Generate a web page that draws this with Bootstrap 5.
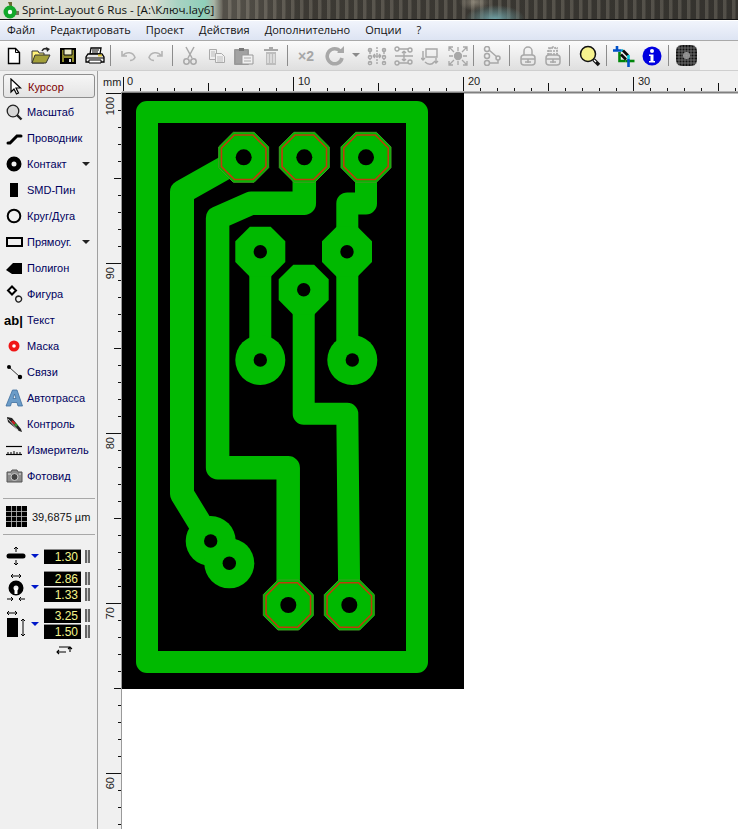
<!DOCTYPE html>
<html lang="ru">
<head>
  <meta charset="UTF-8">
  <meta name="viewport" content="width=device-width, initial-scale=1">
  <title>Sprint-Layout 6 Rus</title>
  <link href="https://cdn.jsdelivr.net/npm/bootstrap@5.3.0/dist/css/bootstrap.min.css" rel="stylesheet">
  <style>
    html, body { height: 100%; }
    body {
      margin: 0;
      overflow: hidden;
      background: #f0f0f0;
      font-family: "Open Sans", "Liberation Sans", sans-serif;
    }
    .app-shell { width: 738px; height: 829px; overflow: hidden; }
    svg { display: block; flex: none; }

    /* title bar */
    .title-bar {
      height: 19px;
      padding-left: 2px;
      font-size: 11.6px;
      color: #111;
      background:
        radial-gradient(ellipse 30px 14px at 495px 19px, #6fa0a4 0, rgba(111,160,164,0) 100%),
        radial-gradient(ellipse 16px 9px at 475px 2px, rgba(200,190,170,.5) 0, rgba(200,190,170,0) 100%),
        repeating-radial-gradient(circle at 30px 8px, rgba(120,115,105,.35) 0 3px, rgba(30,28,25,.3) 4px 9px),
        linear-gradient(90deg, #6b675e 0, #6b675e 235px, #4a4740 300px, #3e3c37 738px);
    }
    .title-glass {
      position: absolute;
      left: 0; top: 0;
      width: 222px; height: 19px;
      background: linear-gradient(90deg, #dedfd6 0, #dcdfd4 150px, #a8d2c2 178px, #8fcfba 205px, #a8b4a4 214px, #6b675e 222px);
    }
    .title-inner { position: relative; gap: 3px; }
    .title-text { white-space: nowrap; }

    /* menu */
    .menu-bar {
      height: 22px;
      padding-left: 7px;
      gap: 15px;
      font-size: 11px;
      color: #111;
      border-top: 1px solid #111;
      border-bottom: 1px solid #a9a9a9;
      box-shadow: inset 0 1px 0 #fff;
      background: linear-gradient(#f2f5fc, #dde4f3);
    }

    /* toolbar */
    .tool-bar { height: 30px; border-bottom: 1px solid #cfcfcf; background: #f1f1f1; }
    .tool-strip { width: 700px; height: 29px; background: linear-gradient(#fbfbfb, #dfdfdf); }
    .tb-btn { width: 27px; height: 29px; }
    .tb-w25 { width: 25px; }
    .tb-w26 { width: 26px; }
    .tb-w28 { width: 28px; }
    .tb-w30 { width: 30px; }
    .tb-w12 { width: 12px; }
    .tb-sep { width: 1px; height: 21px; margin: 0 2px; background: #8c8c8c; }
    .tb-ml1 { margin-left: 1px; }
    .tb-ml2 { margin-left: 2px; }
    .tb-ml3 { margin-left: 3px; }
    .tb-ml4 { margin-left: 4px; }
    .tb-pr1 { padding-right: 1px; }
    .tb-pr2 { padding-right: 2px; }
    .tb-times { font: 700 14px "Liberation Sans", sans-serif; color: #a6a6a6; }

    /* left tool panel */
    .side-panel {
      width: 98px;
      height: 758px;
      padding: 3px 0 0 3px;
      font: 11px "Liberation Sans", sans-serif;
      color: #00005e;
      border-right: 1px solid #a0a0a0;
      background: #f0f0f0;
    }
    .tool-item { width: 92px; height: 26px; padding-left: 1px; white-space: nowrap; }
    .tool-item-icon { width: 23px; }
    .tool-item.is-active {
      height: 24px;
      margin-bottom: 1px;
      padding-top: 1px;
      color: #7e0000;
      border: 1px solid #8e8e8e;
      border-radius: 3px;
      background: linear-gradient(#f6f6f6, #e4e4e4);
    }
    .tool-ab { font: 700 13px "Liberation Sans", sans-serif; color: #000; white-space: nowrap; }
    .tool-caret {
      margin-left: auto;
      margin-right: 5px;
      border-left: 4px solid transparent;
      border-right: 4px solid transparent;
      border-top: 4px solid #222;
    }
    .side-rule { width: 92px; height: 1px; background: #a8a8a8; }
    .side-rule-first { margin-top: 9px; }
    .grid-row { height: 35px; width: 92px; padding-left: 3px; gap: 5px; color: #111; }
    .param-row { width: 92px; padding-left: 3px; }
    .param-row-first { margin-top: 12px; }
    .param-row-next { margin-top: 6px; }
    .param-icon { width: 25px; }
    .blue-caret {
      width: 0;
      margin-right: 5px;
      border-left: 4px solid transparent;
      border-right: 4px solid transparent;
      border-top: 4px solid #0018c8;
    }
    .num-stack { display: flex; flex-direction: column; gap: 1px; }
    .num-box {
      width: 37px;
      height: 15px;
      padding-right: 3px;
      text-align: right;
      font: 12px/14px "Liberation Sans", sans-serif;
      color: #f4f48c;
      background: #000;
      border-top: 1px solid #888;
    }
    .num-spin {
      width: 5px;
      height: 13px;
      margin-left: 4px;
      background: linear-gradient(90deg, #666 0 40%, #ccc 40% 60%, #666 60%);
    }
    .swap-row { width: 92px; padding-left: 51px; height: 14px; }
    .work-area { width: 640px; height: 758px; background: #f0f0f0; }
    .rule-text { font: 11px "Liberation Sans", sans-serif; fill: #222; }
  </style>
</head>
<body>
<div class="app-shell d-flex flex-column">

  <!-- Title bar -->
  <div class="title-bar position-relative d-flex align-items-center">
    <div class="title-glass"></div>
    <div class="title-inner d-flex align-items-center">
      <svg width="17" height="18" viewBox="0 0 17 18">
        <path d="M6 1h4v4l-2 1z" fill="#6a6a30"/>
        <path d="M12 10h5v4h-5z" fill="#77705a"/>
        <circle cx="8" cy="11" r="6.5" fill="#12a82a"/>
        <circle cx="8" cy="11" r="2.2" fill="#fff"/>
      </svg>
      <span class="title-text">Sprint-Layout 6 Rus - [A:\Ключ.lay6]</span>
    </div>
  </div>

  <!-- Menu -->
  <div class="menu-bar d-flex align-items-center">
    <span>Файл</span><span>Редактировать</span><span>Проект</span><span>Действия</span><span>Дополнительно</span><span>Опции</span><span>?</span>
  </div>

  <!-- Toolbar -->
  <div class="tool-bar">
    <div class="tool-strip d-flex align-items-center">
      <div class="d-flex">
        <div class="tb-btn d-flex align-items-center justify-content-center">
          <svg width="18" height="18" viewBox="0 0 18 18"><path d="M3.5 1.5h7l4 4v11h-11z" fill="#fff" stroke="#000" stroke-width="1.4"/><path d="M10.5 1.5v4h4" fill="none" stroke="#000"/></svg>
        </div>
        <div class="tb-btn d-flex align-items-center justify-content-center">
          <svg width="20" height="18" viewBox="0 0 20 18"><path d="M1 4h6l1 2h5v10H1z" fill="#fff27a" stroke="#333"/><path d="M1 16l3-8h15l-4 8z" fill="#a3a03a" stroke="#333"/><path d="M11 4c1-2 3-3 5-2" fill="none" stroke="#222" stroke-width="1.6"/><path d="M15 0l4 2-3 3z" fill="#222"/></svg>
        </div>
        <div class="tb-btn d-flex align-items-center justify-content-center">
          <svg width="18" height="18" viewBox="0 0 18 18"><path d="M2 2h14v14H2z" fill="#8d8a2c" stroke="#000" stroke-width="2"/><path d="M5 2h8v6H5z" fill="#e9e9c8" stroke="#000"/><path d="M5 11h8v5H5z" fill="#000"/><path d="M10 12h2v3h-2z" fill="#ddd"/></svg>
        </div>
        <div class="tb-btn d-flex align-items-center justify-content-center">
          <svg width="20" height="18" viewBox="0 0 20 18"><path d="M6 1h10l-1 6H5z" fill="#fff" stroke="#000" stroke-width="1.3"/><path d="M7 3h7M7 5h6" stroke="#000"/><path d="M3 7h14l2 3v5H1v-5z" fill="#e8e8e8" stroke="#000" stroke-width="1.3"/><path d="M1 11h18" stroke="#000"/><path d="M13 8.500h4" stroke="#d8c23a" stroke-width="2"/><path d="M4 13h12v3H4z" fill="#fff" stroke="#000"/></svg>
        </div>
      </div>
      <div class="tb-sep"></div>

      <div class="d-flex tb-ml3 tb-pr2">
        <div class="tb-btn tb-w26 d-flex align-items-center justify-content-center">
          <svg width="16" height="12" viewBox="0 0 16 12"><path d="M1 1v5h5M2 5.500c3-4 10-4 12 2-1 2-3 3-5 3" fill="none" stroke="#b4b4b4" stroke-width="1.600"/></svg>
        </div>
        <div class="tb-btn tb-w26 d-flex align-items-center justify-content-center">
          <svg width="16" height="12" viewBox="0 0 16 12"><path d="M15 1v5h-5M14 5.500c-3-4-10-4-12 2 1 2 3 3 5 3" fill="none" stroke="#b4b4b4" stroke-width="1.600"/></svg>
        </div>
      </div>
      <div class="tb-sep"></div>

      <div class="d-flex tb-ml1 tb-pr1">
        <div class="tb-btn d-flex align-items-center justify-content-center">
          <svg width="14" height="20" viewBox="0 0 14 20"><path d="M3 1l6 11M11 1L5 12" stroke="#a8a8a8" stroke-width="1.500"/><circle cx="3.500" cy="15.500" r="2.700" fill="none" stroke="#a8a8a8" stroke-width="1.500"/><circle cx="10.500" cy="15.500" r="2.700" fill="none" stroke="#a8a8a8" stroke-width="1.500"/></svg>
        </div>
        <div class="tb-btn d-flex align-items-center justify-content-center">
          <svg width="18" height="16" viewBox="0 0 18 16"><path d="M1.500 1.500h7v10h-7z" fill="#eee" stroke="#aaa"/><path d="M3 4h4M3 6h4M3 8h4" stroke="#bbb"/><path d="M7.500 5.500h6l3 3v6h-9z" fill="#f2f2f2" stroke="#aaa"/><path d="M9 9h6M9 11h6M9 13h6" stroke="#bbb"/></svg>
        </div>
        <div class="tb-btn d-flex align-items-center justify-content-center">
          <svg width="20" height="18" viewBox="0 0 20 18"><path d="M1 3h13v14H1z" fill="#a2a2a2" stroke="#9a9a9a" stroke-linejoin="round" stroke-width="2"/><path d="M5 1h5v3H5z" fill="#777"/><path d="M8 8h11v9H8z" fill="#f0f0f0" stroke="#999"/><path d="M10 11h7M10 14h7" stroke="#aaa"/></svg>
        </div>
        <div class="tb-btn d-flex align-items-center justify-content-center">
          <svg width="16" height="20" viewBox="0 0 16 20"><path d="M6 1h4v2h5v2H1V3h5z" fill="#a8a8a8"/><path d="M3 6h10v13H3z" fill="#bdbdbd"/><path d="M5 8v9M8 8v9M11 8v9" stroke="#eee" stroke-width="1.200"/></svg>
        </div>
      </div>
      <div class="tb-sep"></div>

      <div class="d-flex tb-ml2 align-items-center">
        <div class="tb-btn tb-w28 d-flex align-items-center justify-content-center"><span class="tb-times">×2</span></div>
        <div class="tb-btn tb-w30 d-flex align-items-center justify-content-center">
          <svg width="20" height="20" viewBox="0 0 20 20"><path d="M15.500 5.500A7.500 7.500 0 1 0 17 12" fill="none" stroke="#a8a8a8" stroke-width="3.600"/><path d="M12 7h7V0z" fill="#a8a8a8"/></svg>
        </div>
        <div class="tb-btn tb-w12 d-flex align-items-center justify-content-center">
          <svg width="8" height="5" viewBox="0 0 8 5"><path d="M0 0h8L4 4z" fill="#8a8a8a"/></svg>
        </div>
        <div class="tb-btn tb-ml1 d-flex align-items-center justify-content-center">
          <svg width="20" height="20" viewBox="0 0 20 20" fill="none" stroke="#a8a8a8" stroke-width="1.400"><path d="M3 3v14M17 3v14M10 1v18" stroke-dasharray="2 1"/><circle cx="3" cy="4" r="1.600"/><circle cx="3" cy="11" r="1.600"/><circle cx="3" cy="17" r="1.600"/><circle cx="17" cy="4" r="1.600"/><circle cx="17" cy="11" r="1.600"/><circle cx="17" cy="17" r="1.600"/><path d="M6 10h8M6 10l2-2M6 10l2 2M14 10l-2-2M14 10l-2 2"/></svg>
        </div>
        <div class="tb-btn d-flex align-items-center justify-content-center">
          <svg width="20" height="20" viewBox="0 0 20 20" fill="none" stroke="#a8a8a8" stroke-width="1.400"><circle cx="3" cy="3" r="2"/><circle cx="16" cy="4" r="2"/><circle cx="3" cy="17" r="2"/><circle cx="16" cy="16" r="2"/><path d="M5 3h9M5 17h9M1 10h18" /><path d="M10 5v10M10 5L8 7M10 5l2 2M10 15l-2-2M10 15l2-2"/></svg>
        </div>
        <div class="tb-btn d-flex align-items-center justify-content-center">
          <svg width="20" height="20" viewBox="0 0 20 20" fill="none" stroke="#a8a8a8" stroke-width="1.400"><path d="M5 3h11v8H5zM2 5v9M0 12l2 2 2-2"/><path d="M15 12v5M13 15l2 2 2-2"/><path d="M4 16c3 3 7 3 9 0"/></svg>
        </div>
        <div class="tb-btn d-flex align-items-center justify-content-center">
          <svg width="20" height="20" viewBox="0 0 20 20" fill="none" stroke="#a8a8a8" stroke-width="1.300"><circle cx="10" cy="10" r="3.500" fill="#a8a8a8"/><path d="M1 1l5 5M1 5V1h4M19 1l-5 5M19 5V1h-4M1 19l5-5M1 15v4h4M19 19l-5-5M19 15v4h-4M10 1v4M10 15v4M1 10h4M15 10h4"/></svg>
        </div>
      </div>
      <div class="tb-sep"></div>

      <div class="tb-btn tb-w30 tb-ml1 d-flex align-items-center justify-content-center">
        <svg width="18" height="20" viewBox="0 0 18 20" fill="none" stroke="#a8a8a8" stroke-width="1.500"><circle cx="4" cy="3" r="2.500"/><circle cx="4" cy="10" r="2.500"/><circle cx="4" cy="17" r="2.500"/><circle cx="15" cy="12" r="2"/><path d="M6 4l8 7M6 17h9v-3"/></svg>
      </div>
      <div class="tb-sep"></div>

      <div class="d-flex tb-ml3 tb-pr2">
        <div class="tb-btn tb-w25 d-flex align-items-center justify-content-center">
          <svg width="16" height="20" viewBox="0 0 16 20" fill="none" stroke="#a8a8a8" stroke-width="1.500"><path d="M4 9V5a4 4 0 0 1 8 0v4"/><rect x="1" y="9" width="14" height="10" rx="3" fill="#e8e8e8"/><path d="M1 13h14M5 16h6M8 13v4"/></svg>
        </div>
        <div class="tb-btn tb-w25 d-flex align-items-center justify-content-center">
          <svg width="16" height="20" viewBox="0 0 16 20" fill="none" stroke="#a8a8a8" stroke-width="1.500"><path d="M4 9V5a4 4 0 0 1 8 0v4M3 2h10M2 5h12M2 8h12" stroke-dasharray="2 1"/><rect x="1" y="9" width="14" height="10" rx="3" fill="#e8e8e8"/><path d="M1 13h14M5 16h6M8 13v4"/></svg>
        </div>
      </div>
      <div class="tb-sep"></div>

      <div class="tb-btn tb-w28 tb-ml4 d-flex align-items-center justify-content-center">
        <svg width="22" height="22" viewBox="0 0 22 22"><circle cx="9" cy="9" r="7.500" fill="#f7f38e" stroke="#111" stroke-width="1.500"/><path d="M14.500 14.500l5.500 5.500" stroke="#111" stroke-width="3.500"/><path d="M15 15l2 2" stroke="#fff" stroke-width="1.200"/></svg>
      </div>
      <div class="tb-sep"></div>

      <div class="d-flex tb-ml1">
        <div class="tb-btn tb-w28 d-flex align-items-center justify-content-center">
          <svg width="22" height="22" viewBox="0 0 22 22"><path d="M0 5.500h8M4 1v4" stroke="#0050c8" stroke-width="2.600"/><path d="M8 5.500h2" stroke="#00a8c8" stroke-width="2.600"/><path d="M10 5.500l5 5" stroke="#0a0a0a" stroke-width="2.600"/><path d="M6.500 7v9h6" fill="none" stroke="#00860a" stroke-width="2.600"/><path d="M12.500 16h9" stroke="#00860a" stroke-width="2.600"/><path d="M8 9.500l5 5" stroke="#0a0a0a" stroke-width="2.600"/><path d="M15.500 10v4" stroke="#00c8d8" stroke-width="2.600"/><path d="M15.500 14v8" stroke="#0050c8" stroke-width="2.600"/></svg>
        </div>
        <div class="tb-btn tb-w28 d-flex align-items-center justify-content-center">
          <svg width="20" height="20" viewBox="0 0 20 20"><circle cx="10" cy="10" r="9.500" fill="#0000e0"/><circle cx="10" cy="5" r="2" fill="#fff"/><path d="M7 8.500h4.500V15H13v1.500H7V15h1.500V10H7z" fill="#fff"/></svg>
        </div>
      </div>
      <div class="tb-sep"></div>

      <div class="tb-btn tb-w26 tb-ml2 d-flex align-items-center justify-content-center">
        <svg width="21" height="21" viewBox="0 0 21 21"><rect width="21" height="21" rx="6" fill="#111"/><circle cx="10.500" cy="10.500" r="3.500" fill="#999"/><path d="M0 3h21M0 6h21M0 9h21M0 12h21M0 15h21M0 18h21M3 0v21M6 0v21M9 0v21M12 0v21M15 0v21M18 0v21" stroke="#888" stroke-width=".7"/></svg>
      </div>
    </div>
  </div>

  <div class="d-flex flex-grow-1">
    <!-- Left tools -->
    <div class="side-panel d-flex flex-column">
      <div class="tool-item is-active d-flex align-items-center">
        <div class="tool-item-icon"><svg width="18" height="18" viewBox="0 0 18 18"><path d="M6 1v13l3-3 2.500 5 2-1-2.500-5h4.500z" fill="#fff" stroke="#000" stroke-width="1.200"/></svg></div>
        <span>Курсор</span>
      </div>
      <div class="tool-item d-flex align-items-center">
        <div class="tool-item-icon"><svg width="20" height="20" viewBox="0 0 20 20"><circle cx="9" cy="9" r="5.800" fill="#d8d8d8" stroke="#222" stroke-width="1.300"/><path d="M13 13l4.500 4.500" stroke="#222" stroke-width="2.400"/></svg></div>
        <span>Масштаб</span>
      </div>
      <div class="tool-item d-flex align-items-center">
        <div class="tool-item-icon"><svg width="20" height="20" viewBox="0 0 20 20"><path d="M4 15h2l7-7h4" fill="none" stroke="#000" stroke-width="3" stroke-linecap="round"/></svg></div>
        <span>Проводник</span>
      </div>
      <div class="tool-item d-flex align-items-center">
        <div class="tool-item-icon"><svg width="20" height="20" viewBox="0 0 20 20"><circle cx="10" cy="10" r="5" fill="none" stroke="#000" stroke-width="5"/></svg></div>
        <span>Контакт</span><span class="tool-caret"></span>
      </div>
      <div class="tool-item d-flex align-items-center">
        <div class="tool-item-icon"><svg width="20" height="20" viewBox="0 0 20 20"><path d="M6 3h8v14H6z" fill="#000"/></svg></div>
        <span>SMD-Пин</span>
      </div>
      <div class="tool-item d-flex align-items-center">
        <div class="tool-item-icon"><svg width="20" height="20" viewBox="0 0 20 20"><circle cx="10" cy="10" r="6.300" fill="none" stroke="#000" stroke-width="2"/></svg></div>
        <span>Круг/Дуга</span>
      </div>
      <div class="tool-item d-flex align-items-center">
        <div class="tool-item-icon"><svg width="20" height="20" viewBox="0 0 20 20"><path d="M3 6h15v8H3z" fill="none" stroke="#000" stroke-width="2"/></svg></div>
        <span>Прямоуг.</span><span class="tool-caret"></span>
      </div>
      <div class="tool-item d-flex align-items-center">
        <div class="tool-item-icon"><svg width="20" height="20" viewBox="0 0 20 20"><path d="M2 12l7-7h9v11H8z" fill="#000"/></svg></div>
        <span>Полигон</span>
      </div>
      <div class="tool-item d-flex align-items-center">
        <div class="tool-item-icon"><svg width="20" height="20" viewBox="0 0 20 20"><path d="M8 2.500l4 4-4 4-4-4z" fill="#fff" stroke="#000" stroke-width="2"/><path d="M12 16.500a3 3 0 1 1 3 1.500c-4 1-5-7 .5-5.500" fill="none" stroke="#222" stroke-width="1.400"/></svg></div>
        <span>Фигура</span>
      </div>
      <div class="tool-item d-flex align-items-center">
        <div class="tool-item-icon"><span class="tool-ab">ab|</span></div>
        <span>Текст</span>
      </div>
      <div class="tool-item d-flex align-items-center">
        <div class="tool-item-icon"><svg width="20" height="20" viewBox="0 0 20 20"><circle cx="10" cy="10" r="5.500" fill="#f01414"/><circle cx="10" cy="10" r="1.800" fill="#fff"/></svg></div>
        <span>Маска</span>
      </div>
      <div class="tool-item d-flex align-items-center">
        <div class="tool-item-icon"><svg width="20" height="20" viewBox="0 0 20 20"><path d="M5 5l11 10" stroke="#333"/><circle cx="5" cy="5" r="2" fill="#000"/><circle cx="16" cy="15" r="2.200" fill="#000"/></svg></div>
        <span>Связи</span>
      </div>
      <div class="tool-item d-flex align-items-center">
        <div class="tool-item-icon"><svg width="20" height="20" viewBox="0 0 20 20"><path d="M2 18L8.500 2h4.500l5.500 16h-4.500l-1-3.500H7.500L6.500 18zM9 10.500h3L10.500 6z" fill="#6b9cc8" fill-rule="evenodd" stroke="#3f6f9e" stroke-width=".8"/></svg></div>
        <span>Автотрасса</span>
      </div>
      <div class="tool-item d-flex align-items-center">
        <div class="tool-item-icon"><svg width="20" height="20" viewBox="0 0 20 20"><path d="M3 3l5 1 9 11 1 3-3-1L4 8z" fill="#222"/><path d="M4 5l10 11" stroke="#ddd" stroke-width=".8"/><path d="M8 7l3 3" stroke="#d02020" stroke-width="2"/><path d="M11 10l2 2" stroke="#2c9c2c" stroke-width="2"/></svg></div>
        <span>Контроль</span>
      </div>
      <div class="tool-item d-flex align-items-center">
        <div class="tool-item-icon"><svg width="20" height="20" viewBox="0 0 20 20"><path d="M2 6.500h16" stroke="#000" stroke-width="1.200"/><path d="M2 14.500h16" stroke="#000" stroke-width="1.200"/><path d="M4 14v-2M7 14v-2M10 14v-3M13 14v-2M16 14v-2" stroke="#000"/></svg></div>
        <span>Измеритель</span>
      </div>
      <div class="tool-item d-flex align-items-center">
        <div class="tool-item-icon"><svg width="20" height="20" viewBox="0 0 20 20"><path d="M3 6h4l1-2h5l1 2h4v10H3z" fill="#8c8c8c" stroke="#555"/><circle cx="10.500" cy="11" r="3.500" fill="#444" stroke="#ccc"/><path d="M4 8h3M15 8h2" stroke="#ddd"/></svg></div>
        <span>Фотовид</span>
      </div>

      <div class="side-rule side-rule-first"></div>
      <div class="grid-row d-flex align-items-center">
        <svg width="21" height="21" viewBox="0 0 21 21"><rect width="21" height="21" fill="#000"/><path d="M0 5.500h21M0 10.500h21M0 15.500h21M5.500 0v21M10.500 0v21M15.500 0v21" stroke="#bbb" stroke-width=".8"/></svg>
        <span>39,6875 µm</span>
      </div>
      <div class="side-rule"></div>

      <div class="param-row param-row-first d-flex align-items-center">
        <div class="param-icon"><svg width="20" height="18" viewBox="0 0 20 18"><path d="M3 9h14" stroke="#000" stroke-width="5" stroke-linecap="round"/><path d="M10 0v5M8 2l2-2 2 2M10 18v-5M8 16l2 2 2-2" fill="none" stroke="#000"/></svg></div>
        <span class="blue-caret"></span>
        <div class="num-box">1.30</div><div class="num-spin"></div>
      </div>

      <div class="param-row param-row-next d-flex align-items-center">
        <div class="param-icon"><svg width="20" height="30" viewBox="0 0 20 30"><path d="M5 4h10M5 4l2-2M5 4l2 2M15 4l-2-2M15 4l-2 2" fill="none" stroke="#000"/><circle cx="10" cy="16" r="5" fill="none" stroke="#000" stroke-width="5"/><path d="M8.500 16h3v6h-3z" fill="#fff"/><path d="M1 27h6M7 27l-2-2M7 27l-2 2M19 27h-6M13 27l2-2M13 27l2 2" fill="none" stroke="#000"/></svg></div>
        <span class="blue-caret"></span>
        <div class="num-stack">
          <div class="d-flex align-items-center"><div class="num-box">2.86</div><div class="num-spin"></div></div>
          <div class="d-flex align-items-center"><div class="num-box">1.33</div><div class="num-spin"></div></div>
        </div>
      </div>

      <div class="param-row param-row-next d-flex align-items-center">
        <div class="param-icon"><svg width="22" height="30" viewBox="0 0 22 30"><path d="M1 4h10M1 4l2-2M1 4l2 2M11 4L9 2M11 4L9 6" fill="none" stroke="#000"/><path d="M1 9h11v19H1z" fill="#000"/><path d="M17 10v17M15 12l2-2 2 2M15 25l2 2 2-2" fill="none" stroke="#000"/></svg></div>
        <span class="blue-caret"></span>
        <div class="num-stack">
          <div class="d-flex align-items-center"><div class="num-box">3.25</div><div class="num-spin"></div></div>
          <div class="d-flex align-items-center"><div class="num-box">1.50</div><div class="num-spin"></div></div>
        </div>
      </div>

      <div class="swap-row d-flex align-items-center mt-1">
        <svg width="20" height="10" viewBox="0 0 20 10"><path d="M5 2h11v5M3 7h9M5 5L3 7l2 2M14 4l2-2 2 2" fill="none" stroke="#000" stroke-width="1.100"/></svg>
      </div>
    </div>

    <!-- Rulers and board -->
    <div class="work-area">
      <svg id="boardView" width="640" height="758" viewBox="98 71 640 758">
        <defs>
          <polygon id="octPad" points="-10.400,-25 10.400,-25 25,-10.400 25,10.400 10.400,25 -10.400,25 -25,10.400 -25,-10.400"/>
          <g id="maskPad">
            <use href="#octPad" fill="#00b900" stroke="#3d9a20" stroke-width="1"/>
            <use href="#octPad" transform="scale(.89)" fill="none" stroke="#c03a0c" stroke-width="1.800"/>
            <circle r="8" fill="#000"/>
          </g>
          <g id="plainPad">
            <use href="#octPad" fill="#00b900"/>
            <circle r="6.700" fill="#000"/>
          </g>
          <g id="roundPad">
            <circle r="25" fill="#00b900"/>
          </g>
        </defs>

        <!-- canvas -->
        <rect x="122" y="92" width="616" height="737" fill="#fff"/>
        <path d="M122 92.500h616" stroke="#808080" stroke-width="2"/>
        <path d="M121.500 92v737" stroke="#9a9a9a"/>
        <rect x="122" y="93" width="342" height="596" fill="#000"/>
        <path id="rulerTicks" fill="none" stroke="#111"/>

        <text class="rule-text" x="103" y="86">mm</text>
        <text class="rule-text" x="127" y="85">0</text>
        <text class="rule-text" x="298" y="85">10</text>
        <text class="rule-text" x="468" y="85">20</text>
        <text class="rule-text" x="638" y="85">30</text>
        <text class="rule-text" text-anchor="end" transform="translate(114 97) rotate(-90)">100</text>
        <text class="rule-text" text-anchor="end" transform="translate(114 267) rotate(-90)">90</text>
        <text class="rule-text" text-anchor="end" transform="translate(114 437) rotate(-90)">80</text>
        <text class="rule-text" text-anchor="end" transform="translate(114 607) rotate(-90)">70</text>
        <text class="rule-text" text-anchor="end" transform="translate(114 777) rotate(-90)">60</text>

        <!-- copper -->
        <g fill="none" stroke="#00b900" stroke-linecap="round" stroke-linejoin="round">
          <rect x="147" y="112" width="270" height="550" stroke-width="22"/>
          <path d="M243.700 157.300L182 192V494L210.700 541" stroke-width="24"/>
          <path d="M304.300 157.300V203.300H251L217.600 218V467.700H288.200V605" stroke-width="23.500"/>
          <path d="M366 157.300V203.400H347.300V345L352.300 360" stroke-width="22"/>
          <path d="M260.300 251.700V360" stroke-width="22"/>
          <path d="M303.700 289.700V413.800H347.300L349.300 605" stroke-width="22"/>
        </g>
        <use href="#plainPad" x="260.300" y="251.700"/>
        <use href="#plainPad" x="347" y="251.700"/>
        <use href="#plainPad" x="303.700" y="289.700"/>
        <use href="#roundPad" x="260.300" y="360"/>
        <use href="#roundPad" x="352.300" y="360"/>
        <use href="#roundPad" x="210.700" y="541"/>
        <use href="#roundPad" x="229.300" y="563.300"/>
        <use href="#maskPad" x="243.700" y="157.300"/>
        <use href="#maskPad" x="304.300" y="157.300"/>
        <use href="#maskPad" x="366" y="157.300"/>
        <use href="#maskPad" x="288.300" y="605"/>
        <use href="#maskPad" x="349.300" y="605"/>
        <g fill="#000">
          <circle cx="260.300" cy="360" r="6.700"/>
          <circle cx="352.300" cy="360" r="6.700"/>
          <circle cx="210.700" cy="541" r="6.700"/>
          <circle cx="229.300" cy="563.300" r="6.700"/>
        </g>
      </svg>
    </div>
  </div>
</div>

<script>
  // ruler ticks: 17px per mm
  let d = "";
  for (let i = 0; i * 17 + 123 < 738; i++) {
    const x = i * 17 + 123.5;
    const len = i % 10 === 0 ? 14 : i % 5 === 0 ? 8 : 3;
    d += "M" + x + " 91V" + (91 - len);
  }
  for (let i = 0; i * 17 + 93 < 829; i++) {
    const y = i * 17 + 93.5;
    const len = i % 10 === 0 ? 15 : i % 5 === 0 ? 7 : 3;
    d += "M121 " + y + "H" + (121 - len);
  }
  document.getElementById("rulerTicks").setAttribute("d", d);
</script>
<script src="https://cdn.jsdelivr.net/npm/bootstrap@5.3.0/dist/js/bootstrap.bundle.min.js"></script>
</body>
</html>
